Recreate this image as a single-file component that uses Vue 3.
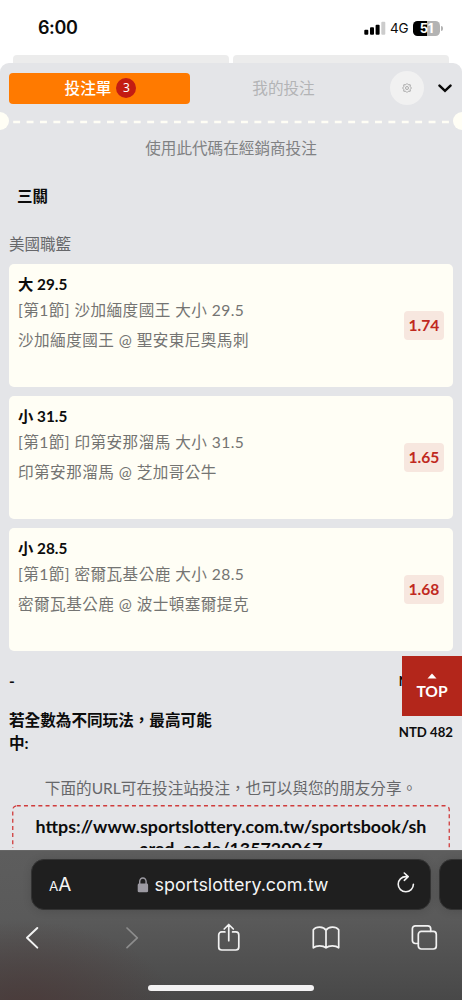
<script setup>
const bets = [
  { pick: '大 29.5', market: '[第1節] 沙加緬度國王 大小 29.5', match: '沙加緬度國王 @ 聖安東尼奧馬刺', odds: '1.74' },
  { pick: '小 31.5', market: '[第1節] 印第安那溜馬 大小 31.5', match: '印第安那溜馬 @ 芝加哥公牛', odds: '1.65' },
  { pick: '小 28.5', market: '[第1節] 密爾瓦基公鹿 大小 28.5', match: '密爾瓦基公鹿 @ 波士頓塞爾提克', odds: '1.68' },
]
</script>

<template>
  <div class="phone">
    <header class="status">
      <span class="time">6:00</span>
      <div class="indicators">
        <svg class="signal" width="22" height="14" viewBox="0 0 22 14">
          <rect x="0.3" y="8.7" width="4" height="5" rx="1" />
          <rect x="6" y="6.3" width="4" height="7.4" rx="1" />
          <rect x="11.6" y="3.7" width="4" height="10" rx="1" />
          <rect class="dim" x="17.3" y="0.7" width="4" height="13" rx="1" />
        </svg>
        <span class="network">4G</span>
        <span class="battery"><span>51</span></span>
        <span class="cap"></span>
      </div>
    </header>
    <div class="behind"><i></i><i></i></div>

    <main class="sheet">
      <nav class="tabs">
        <div class="tab active"><span>投注單</span><b class="count">3</b></div>
        <div class="tab">我的投注</div>
        <div class="gear">
          <svg width="10" height="10" viewBox="0 0 20 20">
            <path d="M7.500 3.500 10 1l2.500 2.500H16.500V7.500L19 10l-2.500 2.500v4h-4L10 19l-2.500-2.500h-4v-4L1 10l2.500-2.500v-4z" />
            <circle cx="10" cy="10" r="3" />
          </svg>
        </div>
        <svg class="chevron" width="14" height="9" viewBox="0 0 14 9"><path d="M1.500 1.600 7 6.800 12.500 1.600" /></svg>
      </nav>
      <div class="perforation">
        <i></i>
        <svg width="444" height="4" viewBox="0 0 444 4"><path d="M4.200 2H444" /></svg>
        <i></i>
      </div>
      <p class="hint">使用此代碼在經銷商投注</p>
      <h2 class="combo">三關</h2>
      <h3 class="league">美國職籃</h3>

      <section class="bets">
        <article v-for="bet in bets" :key="bet.pick" class="bet">
          <div class="info">
            <p class="pick">{{ bet.pick }}</p>
            <p class="market">{{ bet.market }}</p>
            <p class="match">{{ bet.match }}</p>
          </div>
          <span class="odds">{{ bet.odds }}</span>
        </article>
      </section>

      <div class="row stake"><span>-</span><span class="amount">NTD 100</span></div>
      <div class="row payout"><span class="label">若全數為不同玩法，最高可能中:</span><span class="amount">NTD 482</span></div>
      <p class="share">下面的URL可在投注站投注，也可以與您的朋友分享。</p>
      <div class="link">
        <svg class="outline" width="438" height="90" viewBox="0 0 438 90"><rect x=".75" y=".75" width="436.500" height="88" rx="4" /></svg>
        <span>https://www.sportslottery.com.tw/sportsbook/sh<br>ared_code/135720067</span>
      </div>
      <a class="top">
        <svg width="10" height="6" viewBox="0 0 10 6"><path d="M5 .4 9.500 5.400H.5z" /></svg>
        <span>TOP</span>
      </a>
    </main>

    <footer class="browser">
      <div class="bars">
        <div class="address">
          <span class="reader"><small>A</small>A</span>
          <div class="host">
            <svg width="12" height="16" viewBox="0 0 12 16">
              <path class="shackle" d="M2.700 7V4.600a3.200 3.600 0 0 1 6.400 0V7" />
              <rect x=".7" y="6.600" width="10.400" height="8.700" rx="1.400" />
            </svg>
            <span>sportslottery.com.tw</span>
          </div>
          <svg class="reload" width="20" height="22" viewBox="0 0 20 22">
            <path d="M11.600 4.600H9.800A7.600 7.600 0 1 0 17.400 12.200M8.300 1l3.900 3.600-3.900 3.700" />
          </svg>
        </div>
        <div class="address next"></div>
      </div>
      <div class="tools">
        <svg width="28" height="30" viewBox="0 0 28 30"><path class="bold" d="M19.300 5 9 14.800l10.300 9.800" /></svg>
        <svg class="disabled" width="28" height="30" viewBox="0 0 28 30"><path d="M11 5l10.300 9.800L11 24.600" /></svg>
        <svg width="28" height="30" viewBox="0 0 28 30"><path d="M10.900 8.900H7.700a3 3 0 0 0-3 3v12.100a3 3 0 0 0 3 3h14.100a3 3 0 0 0 3-3V11.900a3 3 0 0 0-3-3h-3.200M14.750 17.700V1.700M10.200 6l4.550-4.500 4.550 4.500" /></svg>
        <svg width="28" height="30" viewBox="0 0 28 30"><path d="M14 7.200C11.500 3.200 4 3.200 1.300 6.700v18.100c3-2.700 9.700-2.700 12.700 0 3-2.700 9.700-2.700 12.700 0V6.700C24 3.200 16.500 3.200 14 7.200zM14 7.200v17.600" /></svg>
        <svg width="28" height="30" viewBox="0 0 28 30"><path d="M8.300 20.500H5.400a3 3 0 0 1-3-3V5.800a3 3 0 0 1 3-3h12.300a3 3 0 0 1 3 3v2.500" /><rect x="8.300" y="8.400" width="18" height="17.600" rx="3" /></svg>
      </div>
      <div class="home"></div>
    </footer>
  </div>
</template>

<style>
body { margin: 0; }
</style>

<style scoped>
* { box-sizing: border-box; }
p, h2, h3 { margin: 0; font-weight: 400; }
svg { display: block; flex: none; }
.phone {
  width: 462px; height: 1000px; overflow: hidden;
  display: flex; flex-direction: column;
  background: #e4e5e8; color: #0c0c0c;
  font: 15.600px Lato, "Noto Sans CJK TC", sans-serif;
}
.status { height: 54px; flex: none; padding: 15px 19px 0 38px; display: flex; justify-content: space-between; align-items: flex-start; background: #fff; font-family: Inter, sans-serif; }
.time { font-size: 18px; letter-spacing: -.4px; line-height: 26px; font-weight: 600; }
.indicators { display: flex; align-items: center; height: 26px; }
.signal { margin-right: 1px; }
.signal .dim { fill: #ccc; }
.network { width: 18px; margin: 0 5px 0 3px; font-size: 13.500px; letter-spacing: -.3px; font-weight: 400; }
.battery { width: 27px; height: 15px; border-radius: 4.500px; background: linear-gradient(90deg, #000 51%, #b3b3b3 51%); color: #fff; font-size: 13px; font-weight: 700; line-height: 15px; text-align: center; letter-spacing: -.2px; }
.cap { width: 2px; height: 5px; margin-left: 1px; border-radius: 0 2px 2px 0; background: #b3b3b3; }
.behind { height: 18px; margin-bottom: -9px; flex: none; padding: 1px 13px 9px; display: flex; gap: 4px; background: #fff; }
.behind i { flex: 1; background: #ececec; border-radius: 4px 4px 0 0; }

.sheet { position: relative; height: 785px; flex: none; overflow: hidden; background: #e4e5e8; border-radius: 9px 9px 0 0; }
.tabs { height: 50px; padding: 0 10px 0 9px; display: flex; align-items: center; color: #b3b4b6; }
.tab { width: 181px; height: 31px; margin-right: 3px; display: flex; align-items: center; justify-content: center; gap: 5px; border-radius: 4px; padding-bottom: 2px; }
.active { padding-left: 2px; background: #ff7a00; color: #fff; font-weight: 500; }
.count { width: 20px; height: 20px; margin-top: 1px; border-radius: 50%; background: #c31c12; font: 400 12px/20px "Noto Sans", sans-serif; text-align: center; }
.gear { width: 34px; height: 34px; margin-left: 16px; border-radius: 50%; background: #f1f1f1; display: grid; place-items: center; }
.gear svg { fill: none; stroke: #9a9a9a; stroke-width: 1.600; stroke-linejoin: round; }
.tab + .tab { margin-right: 0; }
.chevron { margin-left: auto; margin-top: 1px; fill: none; stroke: #0a0a0a; stroke-width: 2.500; stroke-linecap: round; }
.perforation { height: 18px; margin: -1px -9px 0; display: flex; align-items: center; }
.perforation i { width: 18px; height: 18px; border-radius: 50%; background: #fffef5; flex: none; }
.perforation svg { margin-top: 2px; stroke: #fffef5; stroke-width: 2.300; stroke-dasharray: 6.900 6.500; }
.hint { margin-top: 6px; height: 24px; line-height: 24px; text-align: center; color: #808183; }
.combo { margin: 24px 0 0 17px; height: 24px; line-height: 24px; font-size: 15.500px; font-weight: 700; }
.league { margin: 24px 0 0 9px; height: 24px; line-height: 24px; font-size: 15.500px; color: #66676a; }
.bets { margin: 8px 9px 0; display: flex; flex-direction: column; gap: 9px; }
.bet { height: 123px; padding: 7px 9px 0; display: flex; justify-content: space-between; background: #fffef5; border-radius: 5px; white-space: nowrap; }
.pick { height: 26px; line-height: 26px; font-size: 15.300px; font-weight: 700; }
.market, .match { line-height: 26px; height: 26px; letter-spacing: .45px; color: #747472; }
.match { margin-top: 4px; }
.odds { width: 40px; height: 29px; margin-top: 40px; border-radius: 4px; background: #f7e7df; color: #c0291e; font-size: 15.600px; line-height: 28px; text-align: center; font-weight: 700; }
.row { padding: 0 9px; display: flex; justify-content: space-between; font-weight: 700; }
.stake { height: 24px; margin-top: 18px; line-height: 24px; }
.payout { height: 46px; margin-top: 16px; line-height: 23px; align-items: center; }
.payout .label { width: 205px; }
.amount { font-size: 13.200px; }
.share { margin-top: 20px; height: 26px; line-height: 26px; text-align: center; color: #66676a; }
.link { position: relative; width: 438px; height: 90px; margin: 4px 12px; padding-top: 10px; text-align: center; font-size: 17.850px; line-height: 22px; font-weight: 700; white-space: nowrap; }
.outline { position: absolute; left: 0; top: 0; fill: none; stroke: #d03c3c; stroke-width: 1.300; stroke-dasharray: 4 3.200; }
.top { position: absolute; right: 0; top: 593px; width: 60px; height: 60px; background: #b3261b; color: #fff; display: flex; flex-direction: column; align-items: center; padding-top: 17px; font-size: 15.600px; line-height: 20px; font-weight: 700; }
.top svg { fill: #fff; }
.top span { margin-top: 2px; }

.browser {
  margin-top: 2px; height: 150px; flex: none; padding-top: 8px; border-top: 1px solid #666;
  background: radial-gradient(ellipse 150px 90px at 25px 160px, rgba(75, 57, 56, .85), rgba(75, 57, 56, 0)), linear-gradient(#5d5d5d, #5a5a5a 45%, #484848);
  color: #f4f4f4; font-family: Inter, sans-serif;
}
.bars { padding-left: 31px; display: flex; gap: 8px; }
.address { width: 400px; height: 51px; flex: none; border-radius: 13px; background: #1f1f1f; border: 1px solid #333; box-shadow: 0 1px 8px #0002; display: flex; align-items: center; justify-content: space-between; padding: 0 14px 0 17px; }
.reader { font-size: 19px; width: 24px; }
.reader small { font-size: 13.500px; }
.host { display: flex; align-items: center; gap: 6px; font-size: 17.900px; margin-left: -4px; }
.host svg { fill: #9c9aa2; }
.shackle { fill: none; stroke: #9c9aa2; stroke-width: 1.400; }
.reload { margin-top: -3px; fill: none; stroke: #f2f2f2; stroke-width: 1.600; stroke-linecap: round; stroke-linejoin: round; }
.tools { margin: 13px 24px 0 18px; height: 30px; display: flex; justify-content: space-between; }
.tools svg { fill: none; stroke: #f2f2f2; stroke-width: 1.700; stroke-linecap: round; stroke-linejoin: round; }
.tools .bold { stroke-width: 2; }
.tools .disabled { stroke: #8d8d8d; }
.home { width: 166px; height: 6px; margin: 32px auto 0; border-radius: 3px; background: #f3f2f3; }
</style>
